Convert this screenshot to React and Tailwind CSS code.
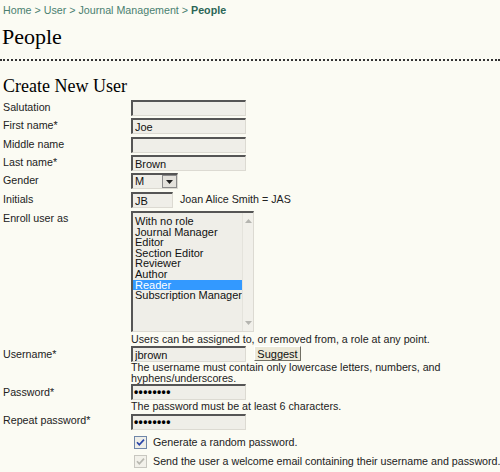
import React from "react";

const boxCls =
  "h-[16px] bg-[#efeee8] border-t-2 border-l-2 border-t-[#555] border-l-[#555] border-b border-r border-b-[#dcdad2] border-r-[#dcdad2]";

function TextInput({ value = "", w = "w-[115px]" }) {
  return (
    <input
      readOnly
      type="text"
      value={value}
      className={`${w} ${boxCls} text-[11px] leading-[12px] pl-[2px] text-[#111] font-['Liberation_Sans',Arial,sans-serif] outline-none block`}
    />
  );
}

function PasswordBox() {
  return (
    <div className={`w-[115px] ${boxCls} pl-[1px] text-[12px] leading-[12px] font-bold text-black tracking-[0.4px] overflow-hidden`} aria-label="password">
      ••••••••
    </div>
  );
}

function Row({ label, h, children, lpt = "pt-[1px]" }) {
  return (
    <div className={`flex ${h}`}>
      <div className={`w-[128px] shrink-0 ${lpt}`}>{label}</div>
      <div className="flex-1">{children}</div>
    </div>
  );
}

function Check({ disabled }) {
  return (
    <svg width="13" height="13" viewBox="0 0 13 13" className="block shrink-0">
      <rect x="0.5" y="0.5" width="12" height="12" fill={disabled ? "#f2f1ea" : "#eeeee8"} stroke={disabled ? "#c8c7c0" : "#6f86a8"} />
      <path d="M3 6.2 L5.3 8.8 L10 3.6" fill="none" stroke={disabled ? "#b8b8b0" : "#2a45a8"} strokeWidth="1.7" />
    </svg>
  );
}

export default function App() {
  const roles = [
    "With no role",
    "Journal Manager",
    "Editor",
    "Section Editor",
    "Reviewer",
    "Author",
    "Reader",
    "Subscription Manager",
  ];
  return (
    <div className="w-[500px] min-h-[472px] overflow-hidden bg-[#fbfbf3] text-[#222] text-[10.7px] leading-[12px] font-['Liberation_Sans',Arial,sans-serif]">
      <div className="pl-[3px] pt-[4px] text-[#4a7f70]">
        Home &gt; User &gt; Journal Management &gt; <span className="font-bold text-[#2b6655]">People</span>
      </div>
      <h1 className="pl-[2px] mt-[8px] text-[22px] leading-[26px] text-black font-['Liberation_Serif','Times_New_Roman',serif]">People</h1>
      <div className="mt-[9px] border-t-2 border-dotted border-[#333]"></div>
      <h2 className="pl-[3px] mt-[15px] text-[18px] leading-[20px] text-black font-['Liberation_Serif','Times_New_Roman',serif]">Create New User</h2>
      <div className="pl-[3px] mt-[4px]">
        <Row label="Salutation" h="h-[18px]"><TextInput /></Row>
        <Row label="First name*" h="h-[19px]"><TextInput value="Joe" /></Row>
        <Row label="Middle name" h="h-[18px]"><TextInput /></Row>
        <Row label="Last name*" h="h-[18px]"><TextInput value="Brown" /></Row>
        <Row label="Gender" h="h-[19px]">
          <div className={`flex w-[47px] ${boxCls}`}>
            <div className="flex-1 pl-[2px] text-[11px] leading-[13px] text-[#111]">M</div>
            <div className="w-[15px] h-[13px] flex items-center justify-center bg-[#e4e2dc] border border-[#8a8a8a]">
              <svg width="7" height="4" viewBox="0 0 7 4"><path d="M0 0 H7 L3.5 4 Z" fill="#222" /></svg>
            </div>
          </div>
        </Row>
        <Row label="Initials" h="h-[19px]">
          <div className="flex items-start">
            <TextInput value="JB" w="w-[42px]" />
            <span className="ml-[7px] pt-[1px]">Joan Alice Smith = JAS</span>
          </div>
        </Row>
        <Row label="Enroll user as" h="h-[135px]">
          <div className="flex w-[123px] h-[121px] bg-[#efeee8] border-t-2 border-l-2 border-t-[#555] border-l-[#555] border-b border-r border-b-[#dcdad2] border-r-[#dcdad2]">
            <div className="flex-1 pt-[3px] text-[11px] leading-[10.6px] text-[#111]">
              {roles.map((r) => (
                <div key={r} className={`pl-[2px] h-[10.6px] whitespace-nowrap ${r === "Reader" ? "bg-[#3399ff] text-white" : ""}`}>{r}</div>
              ))}
            </div>
            <div className="w-[14px] bg-[#f1f0ea] border-l border-[#e4e3dc] flex flex-col justify-between items-center py-[6px]">
              <svg width="7" height="4" viewBox="0 0 7 4"><path d="M0 4 H7 L3.5 0 Z" fill="#b5b5b0" /></svg>
              <svg width="7" height="4" viewBox="0 0 7 4"><path d="M0 0 H7 L3.5 4 Z" fill="#b5b5b0" /></svg>
            </div>
          </div>
          <div className="mt-[1px]">Users can be assigned to, or removed from, a role at any point.</div>
        </Row>
        <Row label="Username*" h="h-[38px]" lpt="pt-[2px]">
          <div className="flex items-start">
            <TextInput value="jbrown" />
            <button className="ml-[8px] w-[47px] h-[15px] bg-[#ece9d8] border border-t-white border-l-white border-b-[#716f64] border-r-[#716f64] text-[11px] leading-[12px] text-[#111] flex items-center justify-center">Suggest</button>
          </div>
          <div className="leading-[11px]">The username must contain only lowercase letters, numbers, and<br />hyphens/underscores.</div>
        </Row>
        <Row label="Password*" h="h-[30px]" lpt="pt-[2px]">
          <PasswordBox />
          <div>The password must be at least 6 characters.</div>
        </Row>
        <Row label="Repeat password*" h="h-[19px]" lpt="pt-[0px]">
          <PasswordBox />
        </Row>
        <div className="pl-[131px] mt-[1px] flex items-center h-[16px]">
          <Check />
          <span className="ml-[6px] whitespace-nowrap">Generate a random password.</span>
        </div>
        <div className="pl-[131px] mt-[3px] flex items-center h-[16px]">
          <Check disabled />
          <span className="ml-[6px] whitespace-nowrap">Send the user a welcome email containing their username and password.</span>
        </div>
      </div>
    </div>
  );
}
